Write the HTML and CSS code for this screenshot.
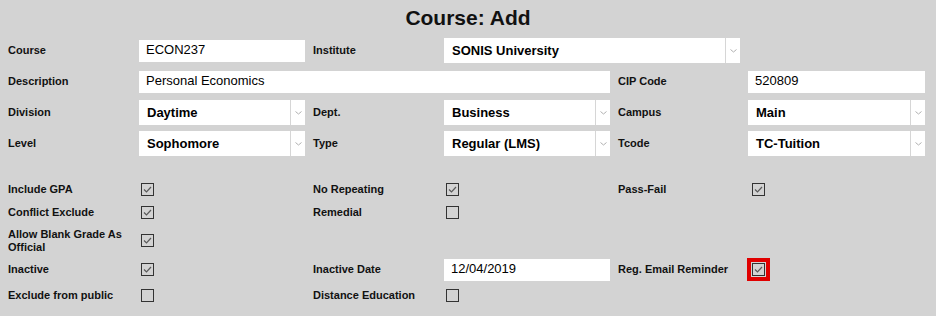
FILE: index.html
```html
<!DOCTYPE html>
<html lang="en">
<head>
    <meta charset="UTF-8">
    <meta name="viewport" content="width=device-width, initial-scale=1.0">
    <title>Course: Add</title>
    <link rel="stylesheet" href="styles.css">
</head>
<body>
    <h1 class="title">Course: Add</h1>

    <!-- main course fields -->
    <div class="fields">
        <label class="lbl">Course</label>
        <input class="txt" type="text" value="ECON237">
        <label class="lbl">Institute</label>
        <div class="sel sel-wide"><span class="sel-val">SONIS University</span><span class="sel-btn"><svg width="7" height="4" viewBox="0 0 7 4"><polyline points="0.5,0.5 3.5,3 6.5,0.5" /></svg></span></div>
        <span></span>

        <label class="lbl">Description</label>
        <input class="txt span3" type="text" value="Personal Economics">
        <label class="lbl">CIP Code</label>
        <input class="txt" type="text" value="520809">

        <label class="lbl">Division</label>
        <div class="sel"><span class="sel-val">Daytime</span><span class="sel-btn"><svg width="7" height="4" viewBox="0 0 7 4"><polyline points="0.5,0.5 3.5,3 6.5,0.5" /></svg></span></div>
        <label class="lbl">Dept.</label>
        <div class="sel"><span class="sel-val">Business</span><span class="sel-btn"><svg width="7" height="4" viewBox="0 0 7 4"><polyline points="0.5,0.5 3.5,3 6.5,0.5" /></svg></span></div>
        <label class="lbl">Campus</label>
        <div class="sel"><span class="sel-val">Main</span><span class="sel-btn"><svg width="7" height="4" viewBox="0 0 7 4"><polyline points="0.5,0.5 3.5,3 6.5,0.5" /></svg></span></div>

        <label class="lbl">Level</label>
        <div class="sel"><span class="sel-val">Sophomore</span><span class="sel-btn"><svg width="7" height="4" viewBox="0 0 7 4"><polyline points="0.5,0.5 3.5,3 6.5,0.5" /></svg></span></div>
        <label class="lbl">Type</label>
        <div class="sel"><span class="sel-val">Regular (LMS)</span><span class="sel-btn"><svg width="7" height="4" viewBox="0 0 7 4"><polyline points="0.5,0.5 3.5,3 6.5,0.5" /></svg></span></div>
        <label class="lbl">Tcode</label>
        <div class="sel"><span class="sel-val">TC-Tuition</span><span class="sel-btn"><svg width="7" height="4" viewBox="0 0 7 4"><polyline points="0.5,0.5 3.5,3 6.5,0.5" /></svg></span></div>
    </div>

    <!-- yes/no flags -->
    <div class="flags">
        <label class="lbl">Include GPA</label>
        <span class="cb"><svg width="11" height="11" viewBox="0 0 11 11"><polyline points="2,5.5 4.5,8 9,3" /></svg></span>
        <label class="lbl">No Repeating</label>
        <span class="cb"><svg width="11" height="11" viewBox="0 0 11 11"><polyline points="2,5.5 4.5,8 9,3" /></svg></span>
        <label class="lbl">Pass-Fail</label>
        <span class="cb cb-right"><svg width="11" height="11" viewBox="0 0 11 11"><polyline points="2,5.5 4.5,8 9,3" /></svg></span>

        <label class="lbl">Conflict Exclude</label>
        <span class="cb"><svg width="11" height="11" viewBox="0 0 11 11"><polyline points="2,5.5 4.5,8 9,3" /></svg></span>
        <label class="lbl">Remedial</label>
        <span class="cb"></span>
        <span></span>
        <span></span>

        <label class="lbl">Allow Blank Grade As Official</label>
        <span class="cb"><svg width="11" height="11" viewBox="0 0 11 11"><polyline points="2,5.5 4.5,8 9,3" /></svg></span>
        <span></span>
        <span></span>
        <span></span>
        <span></span>

        <label class="lbl">Inactive</label>
        <span class="cb"><svg width="11" height="11" viewBox="0 0 11 11"><polyline points="2,5.5 4.5,8 9,3" /></svg></span>
        <label class="lbl">Inactive Date</label>
        <input class="txt" type="text" value="12/04/2019">
        <label class="lbl">Reg. Email Reminder</label>
        <span class="cb cb-right cb-flag"><svg width="11" height="11" viewBox="0 0 11 11"><polyline points="2,5.5 4.5,8 9,3" /></svg></span>

        <label class="lbl">Exclude from public</label>
        <span class="cb"></span>
        <label class="lbl">Distance Education</label>
        <span class="cb"></span>
        <span></span>
        <span></span>
    </div>
</body>
</html>
```

FILE: styles.css
```css
body {
    margin: 0;
    background-color: #d3d3d3;
    color: #111;
    font-family: "Liberation Sans", Arial, sans-serif;
}
.title {
    margin: 0;
    height: 35px;
    line-height: 36px;
    text-align: center;
    font-size: 21px;
    font-weight: bold;
}
.fields,
.flags {
    display: grid;
    grid-template-columns: 139px 166px 139px 166px 138px 177px;
    align-items: center;
}
.fields {
    grid-auto-rows: 31px;
}
.flags {
    margin-top: 19px;
    grid-template-rows: 23px 23px 33px 25px 27px;
}
.lbl {
    padding-left: 8px;
    font-size: 11px;
    font-weight: bold;
    line-height: 13px;
}
.flags .lbl {
    padding-right: 10px;
}
.txt {
    box-sizing: border-box;
    width: 100%;
    height: 22px;
    margin: 0;
    border: none;
    padding: 0 0 2px 7px;
    background: #fff;
    color: #000;
    font-family: "Liberation Sans", Arial, sans-serif;
    font-size: 13px;
    outline: none;
}
.span3 {
    grid-column: span 3;
}
.sel {
    display: flex;
    height: 25px;
    background: #fff;
}
.sel-wide {
    grid-column: span 2;
    width: 296px;
}
.sel-val {
    flex: 1;
    padding-left: 8px;
    font-size: 13px;
    font-weight: bold;
    line-height: 26px;
    color: #000;
}
.sel-btn {
    width: 14px;
    border-left: 1px solid #d6d6d6;
    display: flex;
    align-items: center;
    justify-content: center;
}
.sel-btn svg {
    fill: none;
    stroke: #b0b0b0;
    stroke-width: 1;
}
.cb {
    box-sizing: border-box;
    width: 13px;
    height: 13px;
    margin-left: 2px;
    border: 1px solid #333;
    display: flex;
    align-items: center;
    justify-content: center;
}
.cb svg {
    fill: none;
    stroke: #5a5a5a;
    stroke-width: 1.2;
}
.cb-right {
    margin-left: 4px;
}
.cb-flag {
    outline: 4px solid #e00000;
    outline-offset: 1px;
}
```
